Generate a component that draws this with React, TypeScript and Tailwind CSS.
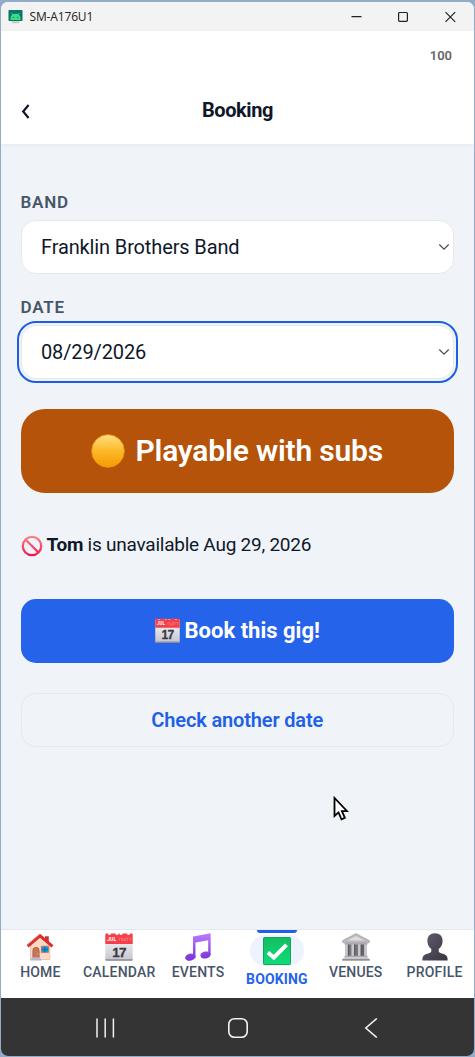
import React from 'react';

type IconProps = { className?: string };

const AndroidLogo: React.FC = () => (
  <svg className="w-[15px] h-[14px] shrink-0" viewBox="0 0 15 14">
    <rect x="0.5" width="14" height="11" rx="0.8" fill="#087568" />
    <path d="M2.500 10V8a5 4.200 0 0 1 10 0v2z" fill="#3ddc84" />
    <path d="M3.400 2.800l1.400 2.200M11.600 2.800l-1.400 2.200" stroke="#3ddc84" strokeWidth="0.9" />
    <circle cx="5.400" cy="7.300" r="0.6" fill="#087568" />
    <circle cx="9.600" cy="7.300" r="0.6" fill="#087568" />
    <rect x="3.5" y="11.3" width="8" height="2" rx="0.6" fill="#c9c9c9" />
  </svg>
);

const ChevronDown: React.FC = () => (
  <svg className="w-[12px] h-[8px]" viewBox="0 0 12 8" fill="none">
    <path d="M1.3 1.5L6 6.1l4.700-4.600" stroke="#4a4f5e" strokeWidth="1.3" />
  </svg>
);

const HomeIcon: React.FC<IconProps> = ({ className }) => (
  <svg className={className} viewBox="0 0 28 28">
    <path d="M4.500 12.500L14 4l9.800 8.500V26.500H4.500z" fill="#fcd9c2" stroke="#d9a58c" strokeWidth="0.5" />
    <path d="M19 3.200h3.800V10L19 7z" fill="#c93434" />
    <path d="M14 0.800L0.700 12l1.800 2.400L14 4.800l11.500 9.600 2-2.200z" fill="#d92e2e" />
    <path d="M14 1.200L2.200 11.400" stroke="#f4605a" strokeWidth="1" />
    <path d="M6.800 26.500V17.500a3.200 3.200 0 0 1 6.400 0v9z" fill="#c9735a" stroke="#9c4f3c" strokeWidth="0.6" />
    <circle cx="11.800" cy="20.800" r="0.600" fill="#f6cf58" />
    <rect x="15.300" y="13.200" width="7.200" height="6.200" fill="#1c96d8" stroke="#c97b58" strokeWidth="0.800" />
    <path d="M18.900 13.200v6.200M15.300 16.300h7.200" stroke="#155a8a" strokeWidth="0.700" />
    <path d="M6 24.300h7.800l2 3.200H4z" fill="#b9b6c8" />
  </svg>
);

const CalendarIcon: React.FC<IconProps> = ({ className }) => (
  <svg className={className} viewBox="0 0 28 28">
    <defs>
      <linearGradient id="calPaper" x1="0" y1="0" x2="0" y2="1">
        <stop offset="0" stopColor="#fafafa" />
        <stop offset="1" stopColor="#c6c5ce" />
      </linearGradient>
    </defs>
    <rect x="0.300" y="1.500" width="27.400" height="26" rx="1" fill="url(#calPaper)" />
    <path d="M0.300 26.300h27.400v0.400a1 1 0 0 1-1 1H1.300a1 1 0 0 1-1-1z" fill="#8d8b98" />
    <path d="M1.300 0.500H3a1.500 1.500 0 0 0 3 0h4.500a1.500 1.500 0 0 0 3 0h1a1.500 1.500 0 0 0 3 0h4.500a1.500 1.500 0 0 0 3 0h1.700a1 1 0 0 1 1 1V11H0.300V1.500a1 1 0 0 1 1-1z" fill="#f5404a" />
    <path d="M14.500 7.800V5h2v2.800M17.500 5v2.800h2V5M20.500 7.800V5h2v2.800M23.500 5h2v2.800" fill="none" stroke="#fa7c80" strokeWidth="0.700" />
    <text x="2.300" y="8.400" fontSize="5" fontWeight="700" fill="#fff" fontFamily="Roboto, sans-serif">JUL</text>
    <text x="14" y="23.900" textAnchor="middle" fontSize="13.500" fontWeight="700" fill="#3a3840" stroke="#3a3840" strokeWidth="0.300" fontFamily="Liberation Sans, sans-serif" letterSpacing="-0.800">17</text>
  </svg>
);

const MusicIcon: React.FC<IconProps> = ({ className }) => (
  <svg className={className} viewBox="0 0 28 28">
    <defs>
      <linearGradient id="notes" x1="0" y1="0" x2="0" y2="28" gradientUnits="userSpaceOnUse">
        <stop offset="0" stopColor="#bd7bff" />
        <stop offset="1" stopColor="#7a32d8" />
      </linearGradient>
    </defs>
    <g fill="url(#notes)">
      <path d="M9 3.500L26.600 0.300V22h-2.400V7.200L11.500 9.600V25H9z" />
      <ellipse cx="6.300" cy="24.200" rx="5.200" ry="3.500" transform="rotate(-12 6.300 24.200)" />
      <ellipse cx="21.500" cy="22" rx="5.200" ry="3.500" transform="rotate(-12 21.500 22)" />
    </g>
  </svg>
);

const CheckIcon: React.FC<IconProps> = ({ className }) => (
  <svg className={className} viewBox="0 0 28 28">
    <defs>
      <linearGradient id="check" x1="0" y1="0" x2="0" y2="1">
        <stop offset="0" stopColor="#12bd62" />
        <stop offset="1" stopColor="#0edc78" />
      </linearGradient>
    </defs>
    <rect x="0.500" y="0.500" width="27" height="27" rx="0.800" fill="url(#check)" stroke="#0b9a52" strokeWidth="0.900" />
    <path d="M4.800 15.500l6 5L23.500 7.800" fill="none" stroke="#fff" strokeWidth="4" />
  </svg>
);

const VenueIcon: React.FC<IconProps> = ({ className }) => (
  <svg className={className} viewBox="0 0 28 28">
    <rect x="3.500" y="10" width="21" height="14" fill="#77757c" />
    <path d="M14 0.500L27.300 7.500v2.200H0.700V7.500z" fill="#bab9be" stroke="#8f8d94" strokeWidth="0.500" />
    <path d="M14 3L5.500 7.500h17z" fill="#dddce0" />
    <path d="M4.500 10v14M10.700 10v14M17.300 10v14M23.500 10v14" stroke="#c9c8cc" strokeWidth="2.600" />
    <path d="M6.500 10v14M12.700 10v14M19.300 10v14M21 10v14" stroke="#4e4c53" strokeWidth="0.800" />
    <path d="M2.500 10h23v1.500h-23zM2.500 22.800h23v1.700h-23z" fill="#aaa9af" />
    <path d="M1.300 24.500h25.400v1.500H1.300z" fill="#c6c5ca" />
    <path d="M0.200 26h27.600v1.700H0.200z" fill="#8f8d96" />
  </svg>
);

const ProfileIcon: React.FC<IconProps> = ({ className }) => (
  <svg className={className} viewBox="0 0 28 28">
    <defs>
      <linearGradient id="bust" x1="0" y1="0" x2="1" y2="1">
        <stop offset="0" stopColor="#625c70" />
        <stop offset="1" stopColor="#39353f" />
      </linearGradient>
    </defs>
    <path d="M14 0.300c4.800 0 7.600 3 7.600 7.500 0 3.800-1.600 6.700-3.900 8.300v2.100c0 1.200 1.200 1.700 3.200 2.300 3.800 1 5.700 2.500 5.700 5.500v1.500H1.400V26c0-3 1.900-4.500 5.700-5.500 2-.6 3.200-1.100 3.200-2.300v-2.100C8 14.500 6.400 11.600 6.400 7.800 6.400 3.300 9.200 0.300 14 0.300z" fill="url(#bust)" />
  </svg>
);

const YellowCircle: React.FC<IconProps> = ({ className }) => (
  <svg className={className} viewBox="0 0 34 34">
    <defs>
      <linearGradient id="yellowDot" x1="0" y1="0" x2="0" y2="1">
        <stop offset="0" stopColor="#ffe083" />
        <stop offset="0.500" stopColor="#fcb828" />
        <stop offset="1" stopColor="#f59b00" />
      </linearGradient>
    </defs>
    <circle cx="17" cy="17" r="16.300" fill="url(#yellowDot)" stroke="#ee9a12" strokeWidth="0.900" />
  </svg>
);

const ProhibitedIcon: React.FC<IconProps> = ({ className }) => (
  <svg className={className} viewBox="0 0 22 22">
    <defs>
      <linearGradient id="stop" x1="0" y1="0" x2="0" y2="22" gradientUnits="userSpaceOnUse">
        <stop offset="0" stopColor="#f98c8c" />
        <stop offset="1" stopColor="#f0104e" />
      </linearGradient>
    </defs>
    <circle cx="11" cy="11" r="9.200" fill="none" stroke="url(#stop)" strokeWidth="2.300" />
    <path d="M4.500 4.500l13 13" stroke="url(#stop)" strokeWidth="2.300" />
  </svg>
);

const NAV_ITEMS = [
  { label: 'HOME', icon: HomeIcon },
  { label: 'CALENDAR', icon: CalendarIcon },
  { label: 'EVENTS', icon: MusicIcon },
  { label: 'BOOKING', icon: CheckIcon, active: true },
  { label: 'VENUES', icon: VenueIcon },
  { label: 'PROFILE', icon: ProfileIcon },
];

const Field: React.FC<{ label: string; value: string; focused?: boolean }> = ({ label, value, focused }) => (
  <div>
    <div className="h-[28px] text-[17px] leading-[20px] font-semibold tracking-[0.750px] text-[#475569]">{label}</div>
    <button
      className={`flex h-[54px] w-full items-center justify-between rounded-[15px] border border-[#e5e9ee] bg-white pl-[19.500px] pr-[3px] text-[20px] tracking-[-0.130px] text-[#0f172a] ${
        focused ? 'outline-2 outline-offset-[2.500px] outline-[#1d5fe4]' : ''
      }`}
    >
      <span>{value}</span>
      <ChevronDown />
    </button>
  </div>
);

const App: React.FC = () => {
  return (
    <div className="h-[1057px] w-[475px] bg-[#91acc9] px-px pt-[2px] pb-px font-[Roboto,sans-serif] text-[#0f172a]">
      <div className="relative flex h-full flex-col overflow-hidden rounded-[7px] bg-[#f0f4f9]">
        {/* Window title bar */}
        <div className="flex h-[29px] shrink-0 items-center bg-[#f3f3f3] pl-[7px]">
          <AndroidLogo />
          <span className="ml-[6.500px] font-['Open_Sans',sans-serif] text-[12px] tracking-[-0.150px] text-[#222]">SM-A176U1</span>
          <div className="ml-auto flex items-center pr-[17px]">
            <svg className="h-[12px] w-[106px]" viewBox="0 0 106 12" fill="none" stroke="#222" strokeWidth="1.200">
              <path d="M0.500 5.700h10" />
              <rect x="47.600" y="1.500" width="8.800" height="8.800" rx="1" />
              <path d="M94.500 1.200l9.700 9.700M104.200 1.200l-9.700 9.700" />
            </svg>
          </div>
        </div>

        {/* App header */}
        <header className="flex h-[113px] shrink-0 flex-col bg-white shadow-[0_1px_4px_rgba(15,23,42,0.05)]">
          <div className="flex h-[50px] justify-end pt-[17px] pr-[22px] text-[13px] leading-[16px] font-semibold text-[#666]">100</div>
          <div className="grid grid-cols-3 items-center h-[58px]">
            <svg className="ml-[19px] mt-[3px] h-[15px] w-[10px]" viewBox="0 0 10 15" fill="none">
              <path d="M8.600 1L3.200 7.500 8.600 14" stroke="#0f172a" strokeWidth="2.200" />
            </svg>
            <h1 className="-mt-px text-center text-[20px] font-bold tracking-[-0.400px]">Booking</h1>
          </div>
        </header>

        <main className="flex-1 pl-[19.500px] pr-[20px] pt-[48px]">
          <Field label="BAND" value="Franklin Brothers Band" />
          <div className="mt-[23px]">
            <Field label="DATE" value="08/29/2026" focused />
          </div>

          <div className="mt-[29.500px] flex h-[84px] items-center justify-center gap-[10px] rounded-[24px] bg-[#b45309] text-[30px] font-semibold tracking-[-0.170px] text-white">
            <YellowCircle className="size-[34px]" />
            <span>Playable with subs</span>
          </div>

          <p className="mt-[39px] flex h-[28px] items-center text-[19px] tracking-[-0.240px]">
            <ProhibitedIcon className="mr-[4px] size-[22px]" />
            <span><strong className="font-bold">Tom</strong> is unavailable Aug 29, 2026</span>
          </p>

          <button className="mt-[39.500px] flex h-[64px] w-full items-center justify-center gap-[5px] rounded-[15px] bg-[#2563eb] pb-[2px] text-[22px] font-bold text-white">
            <CalendarIcon className="size-[25px]" />
            <span>Book this gig!</span>
          </button>
          <button className="mt-[30px] h-[54px] w-full rounded-[15px] border border-[#e5e9ee] text-[20px] font-semibold tracking-[-0.150px] text-[#2160e6]">
            Check another date
          </button>
        </main>

        {/* Bottom tabs */}
        <nav className="grid grid-cols-6 h-[69px] shrink-0 border-t border-[#e2e8f0] bg-white">
          {NAV_ITEMS.map(({ label, icon: Icon, active }) => (
            <div key={label} className="flex flex-col items-center">
              {active ? (
                <>
                  <div className="h-[3px] w-[40px] rounded-b-[3px] bg-[#1f60e8]" />
                  <div className="mt-[2px] flex h-[31px] w-[54px] items-center justify-center rounded-full bg-[#edf3fe]">
                    <Icon className="size-[28px]" />
                  </div>
                  <span className="mt-[5px] text-[14px] leading-[16px] font-bold tracking-[0.150px] text-[#2563eb]">{label}</span>
                </>
              ) : (
                <>
                  <Icon className="mt-[3px] size-[28px]" />
                  <span className="mt-[3px] text-[14px] leading-[16px] font-medium tracking-[0.200px] text-[#475569]">{label}</span>
                </>
              )}
            </div>
          ))}
        </nav>

        {/* Android system keys */}
        <div className="flex h-[58px] shrink-0 items-center justify-between bg-[#343434] pl-[94px] pr-[96px] pt-[2px]">
          <svg className="h-[20px] w-[20px]" viewBox="0 0 20 20" stroke="#f2f2f2" strokeWidth="1.500">
            <path d="M2 0.500v19M10.200 0.500v19M18.400 0.500v19" />
          </svg>
          <svg className="mr-[4px] h-[20px] w-[22px]" viewBox="0 0 22 20" fill="none" stroke="#f2f2f2" strokeWidth="1.600">
            <rect x="1.800" y="0.800" width="18.400" height="18.400" rx="5.500" />
          </svg>
          <svg className="h-[20px] w-[14px]" viewBox="0 0 14 20" fill="none" stroke="#f2f2f2" strokeWidth="1.600">
            <path d="M12.800 0.500L1.800 10l11 9.500" />
          </svg>
        </div>

        {/* Mouse pointer */}
        <svg className="absolute left-[332px] top-[794px] h-[26px] w-[16px]" viewBox="0 0 16 26">
          <path d="M1.500 2v18l4-3.600 3 7 3.400-1.500-3-6.700h5.200z" fill="#fff" stroke="#000" strokeWidth="1.800" />
        </svg>
      </div>
    </div>
  );
};

export default App;
